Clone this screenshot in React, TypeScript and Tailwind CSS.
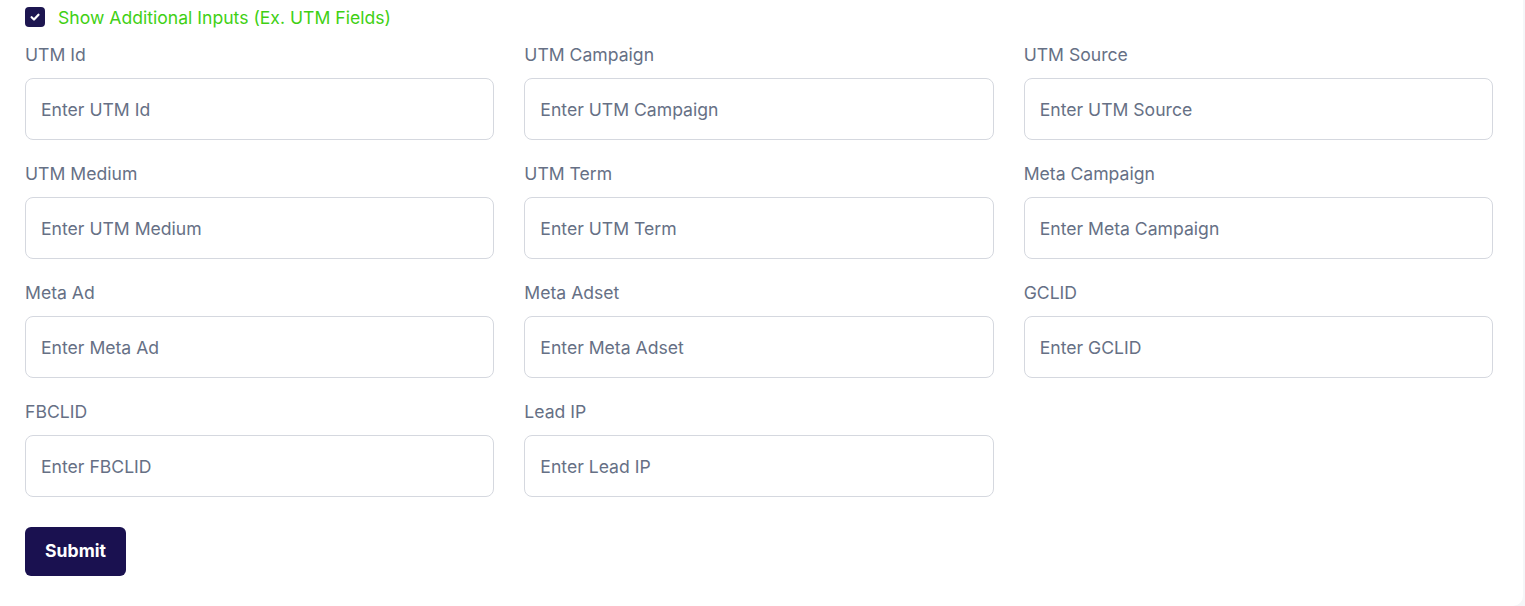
import { useState } from "react";

const fields = [
  { label: "UTM Id", placeholder: "Enter UTM Id" },
  { label: "UTM Campaign", placeholder: "Enter UTM Campaign" },
  { label: "UTM Source", placeholder: "Enter UTM Source" },
  { label: "UTM Medium", placeholder: "Enter UTM Medium" },
  { label: "UTM Term", placeholder: "Enter UTM Term" },
  { label: "Meta Campaign", placeholder: "Enter Meta Campaign" },
  { label: "Meta Ad", placeholder: "Enter Meta Ad" },
  { label: "Meta Adset", placeholder: "Enter Meta Adset" },
  { label: "GCLID", placeholder: "Enter GCLID" },
  { label: "FBCLID", placeholder: "Enter FBCLID" },
  { label: "Lead IP", placeholder: "Enter Lead IP" },
];

const App = () => {
  const [showExtra, setShowExtra] = useState<boolean>(true);

  return (
    <div className="min-h-[606px] w-full bg-[#f5f6f8] font-['Inter',sans-serif]">
      <form
        className="w-[1523px] bg-white rounded-br-[10px] pl-[25px] pr-[30px] pt-[5px] pb-[30px]"
        onSubmit={(e) => e.preventDefault()}
      >
        <label className="flex items-center gap-[13px] h-[26px] cursor-pointer select-none">
          <button
            type="button"
            onClick={() => setShowExtra(!showExtra)}
            className="w-[20px] h-[20px] shrink-0 rounded-[4px] bg-[#1d1650] flex items-center justify-center -mt-[3px]"
          >
            {showExtra && (
              <svg width="12" height="12" viewBox="0 0 12 12" fill="none">
                <path
                  d="M2.6 6.2 L5 8.5 L9.5 3.7"
                  stroke="white"
                  strokeWidth="2.2"
                  strokeLinecap="round"
                  strokeLinejoin="round"
                />
              </svg>
            )}
          </button>
          <span className="text-[17.6px] text-[#3fd014]">
            Show Additional Inputs (Ex. UTM Fields)
          </span>
        </label>

        {showExtra && (
          <div className="grid grid-cols-3 gap-x-[30px] gap-y-[21px] mt-[11px]">
            {fields.map((field) => (
              <div key={field.label} className="flex flex-col">
                <span className="text-[17.6px] leading-[26px] text-[#667085] mb-[10px]">
                  {field.label}
                </span>
                <input
                  type="text"
                  placeholder={field.placeholder}
                  className="h-[62px] w-full rounded-lg border border-[#d5d8df] px-[15px] text-[17.6px] text-[#344054] placeholder:text-[#667085] outline-none"
                />
              </div>
            ))}
          </div>
        )}

        <button
          type="submit"
          className="mt-[30px] h-[49px] w-[101px] rounded-md bg-[#1a1150] text-white text-[17.6px] font-bold"
        >
          Submit
        </button>
      </form>
    </div>
  );
};

export default App;
